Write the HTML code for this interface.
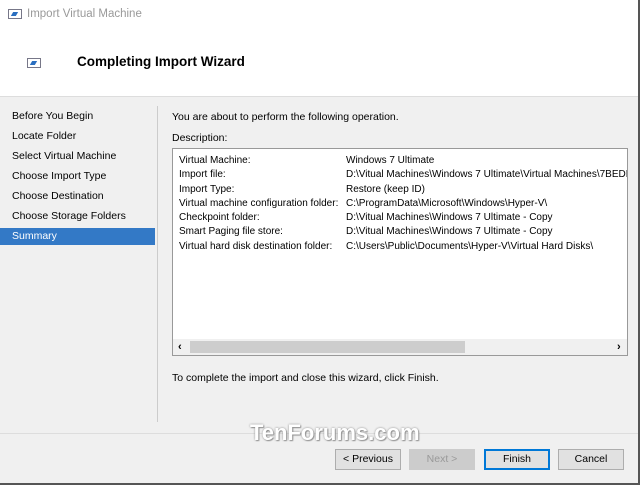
<!DOCTYPE html>
<html><head><style>
body{margin:0;width:640px;height:485px;background:#f0f0f0;font-family:"Liberation Sans",sans-serif;font-size:10px;color:#000;position:relative;overflow:hidden}
.a{position:absolute}
.btn{position:absolute;top:449px;height:19px;width:64px;border:1px solid #adadad;background:#e1e1e1;text-align:center;line-height:19px;font-size:10.5px}
.row{height:14.3px;white-space:nowrap}
.ic{position:absolute;width:12px;height:8px;border:1px solid #778;background:#fff}
.ic:after{content:"";position:absolute;left:3px;top:2px;width:5px;height:4px;background:#2a6fc0;transform:skewX(-30deg)}
</style></head><body>
<div class="a" style="left:0;top:0;width:638px;height:96px;background:#fff"></div>
<div class="a" style="left:638px;top:0;width:2px;height:485px;background:#555"></div>
<div class="a" style="left:0;top:483px;width:640px;height:2px;background:#555"></div>
<div class="a" style="left:0;top:96px;width:638px;height:1px;background:#ddd"></div>
<div class="ic" style="left:8px;top:9px"></div>
<div class="a" style="left:27px;top:8px;color:#999;font-size:11.5px">Import Virtual Machine</div>
<div class="ic" style="left:27px;top:58px"></div>
<div class="a" style="left:77px;top:54px;font-weight:bold;font-size:13.5px">Completing Import Wizard</div>
<div class="a" style="left:157px;top:106px;width:1px;height:316px;background:#ccc"></div>
<div class="a" style="left:12px;top:106px;line-height:20px;font-size:10.5px">Before You Begin<br>Locate Folder<br>Select Virtual Machine<br>Choose Import Type<br>Choose Destination<br>Choose Storage Folders</div>
<div class="a" style="left:0;top:228px;width:155px;height:17px;background:#3379c6;color:#fff;line-height:17px;padding-left:12px;box-sizing:border-box;font-size:10.5px">Summary</div>
<div class="a" style="left:172px;top:111px;font-size:10.5px">You are about to perform the following operation.</div>
<div class="a" style="left:172px;top:132px;font-size:10.5px">Description:</div>
<div class="a" style="left:172px;top:148px;width:454px;height:206px;border:1px solid #999;background:#fff;overflow:hidden">
<div class="a" style="left:6px;top:6px"><div class="row">Virtual Machine:</div><div class="row">Import file:</div><div class="row">Import Type:</div><div class="row">Virtual machine configuration folder:</div><div class="row">Checkpoint folder:</div><div class="row">Smart Paging file store:</div><div class="row">Virtual hard disk destination folder:</div></div>
<div class="a" style="left:173px;top:6px"><div class="row">Windows 7 Ultimate</div><div class="row">D:\Vitual Machines\Windows 7 Ultimate\Virtual Machines\7BEDE0</div><div class="row">Restore (keep ID)</div><div class="row">C:\ProgramData\Microsoft\Windows\Hyper-V\</div><div class="row">D:\Vitual Machines\Windows 7 Ultimate - Copy</div><div class="row">D:\Vitual Machines\Windows 7 Ultimate - Copy</div><div class="row">C:\Users\Public\Documents\Hyper-V\Virtual Hard Disks\</div></div>
<div class="a" style="left:0;top:190px;width:454px;height:16px;background:#f0f0f0"></div>
<div class="a" style="left:17px;top:192px;width:275px;height:12px;background:#cdcdcd"></div>
<div class="a" style="left:5px;top:190px;line-height:16px;font-weight:bold;font-size:11px">&lsaquo;</div>
<div class="a" style="left:444px;top:190px;line-height:16px;font-weight:bold;font-size:11px">&rsaquo;</div>
</div>
<div class="a" style="left:172px;top:372px;font-size:10.5px">To complete the import and close this wizard, click Finish.</div>
<div class="a" style="left:0;top:433px;width:638px;height:1px;background:#ddd"></div>
<div class="a" style="left:250px;top:420px;font-size:22px;font-weight:bold;color:#fff;text-shadow:0 0 2px #888,1px 1px 1px #999">TenForums.com</div>
<div class="btn" style="left:335px">&lt; Previous</div>
<div class="btn" style="left:409px;color:#999;border-color:#ccc;background:#ccc">Next &gt;</div>
<div class="btn" style="left:484px;border:1px solid #0078d7;box-shadow:inset 0 0 0 1px #0078d7">Finish</div>
<div class="btn" style="left:558px">Cancel</div>
</body></html>
